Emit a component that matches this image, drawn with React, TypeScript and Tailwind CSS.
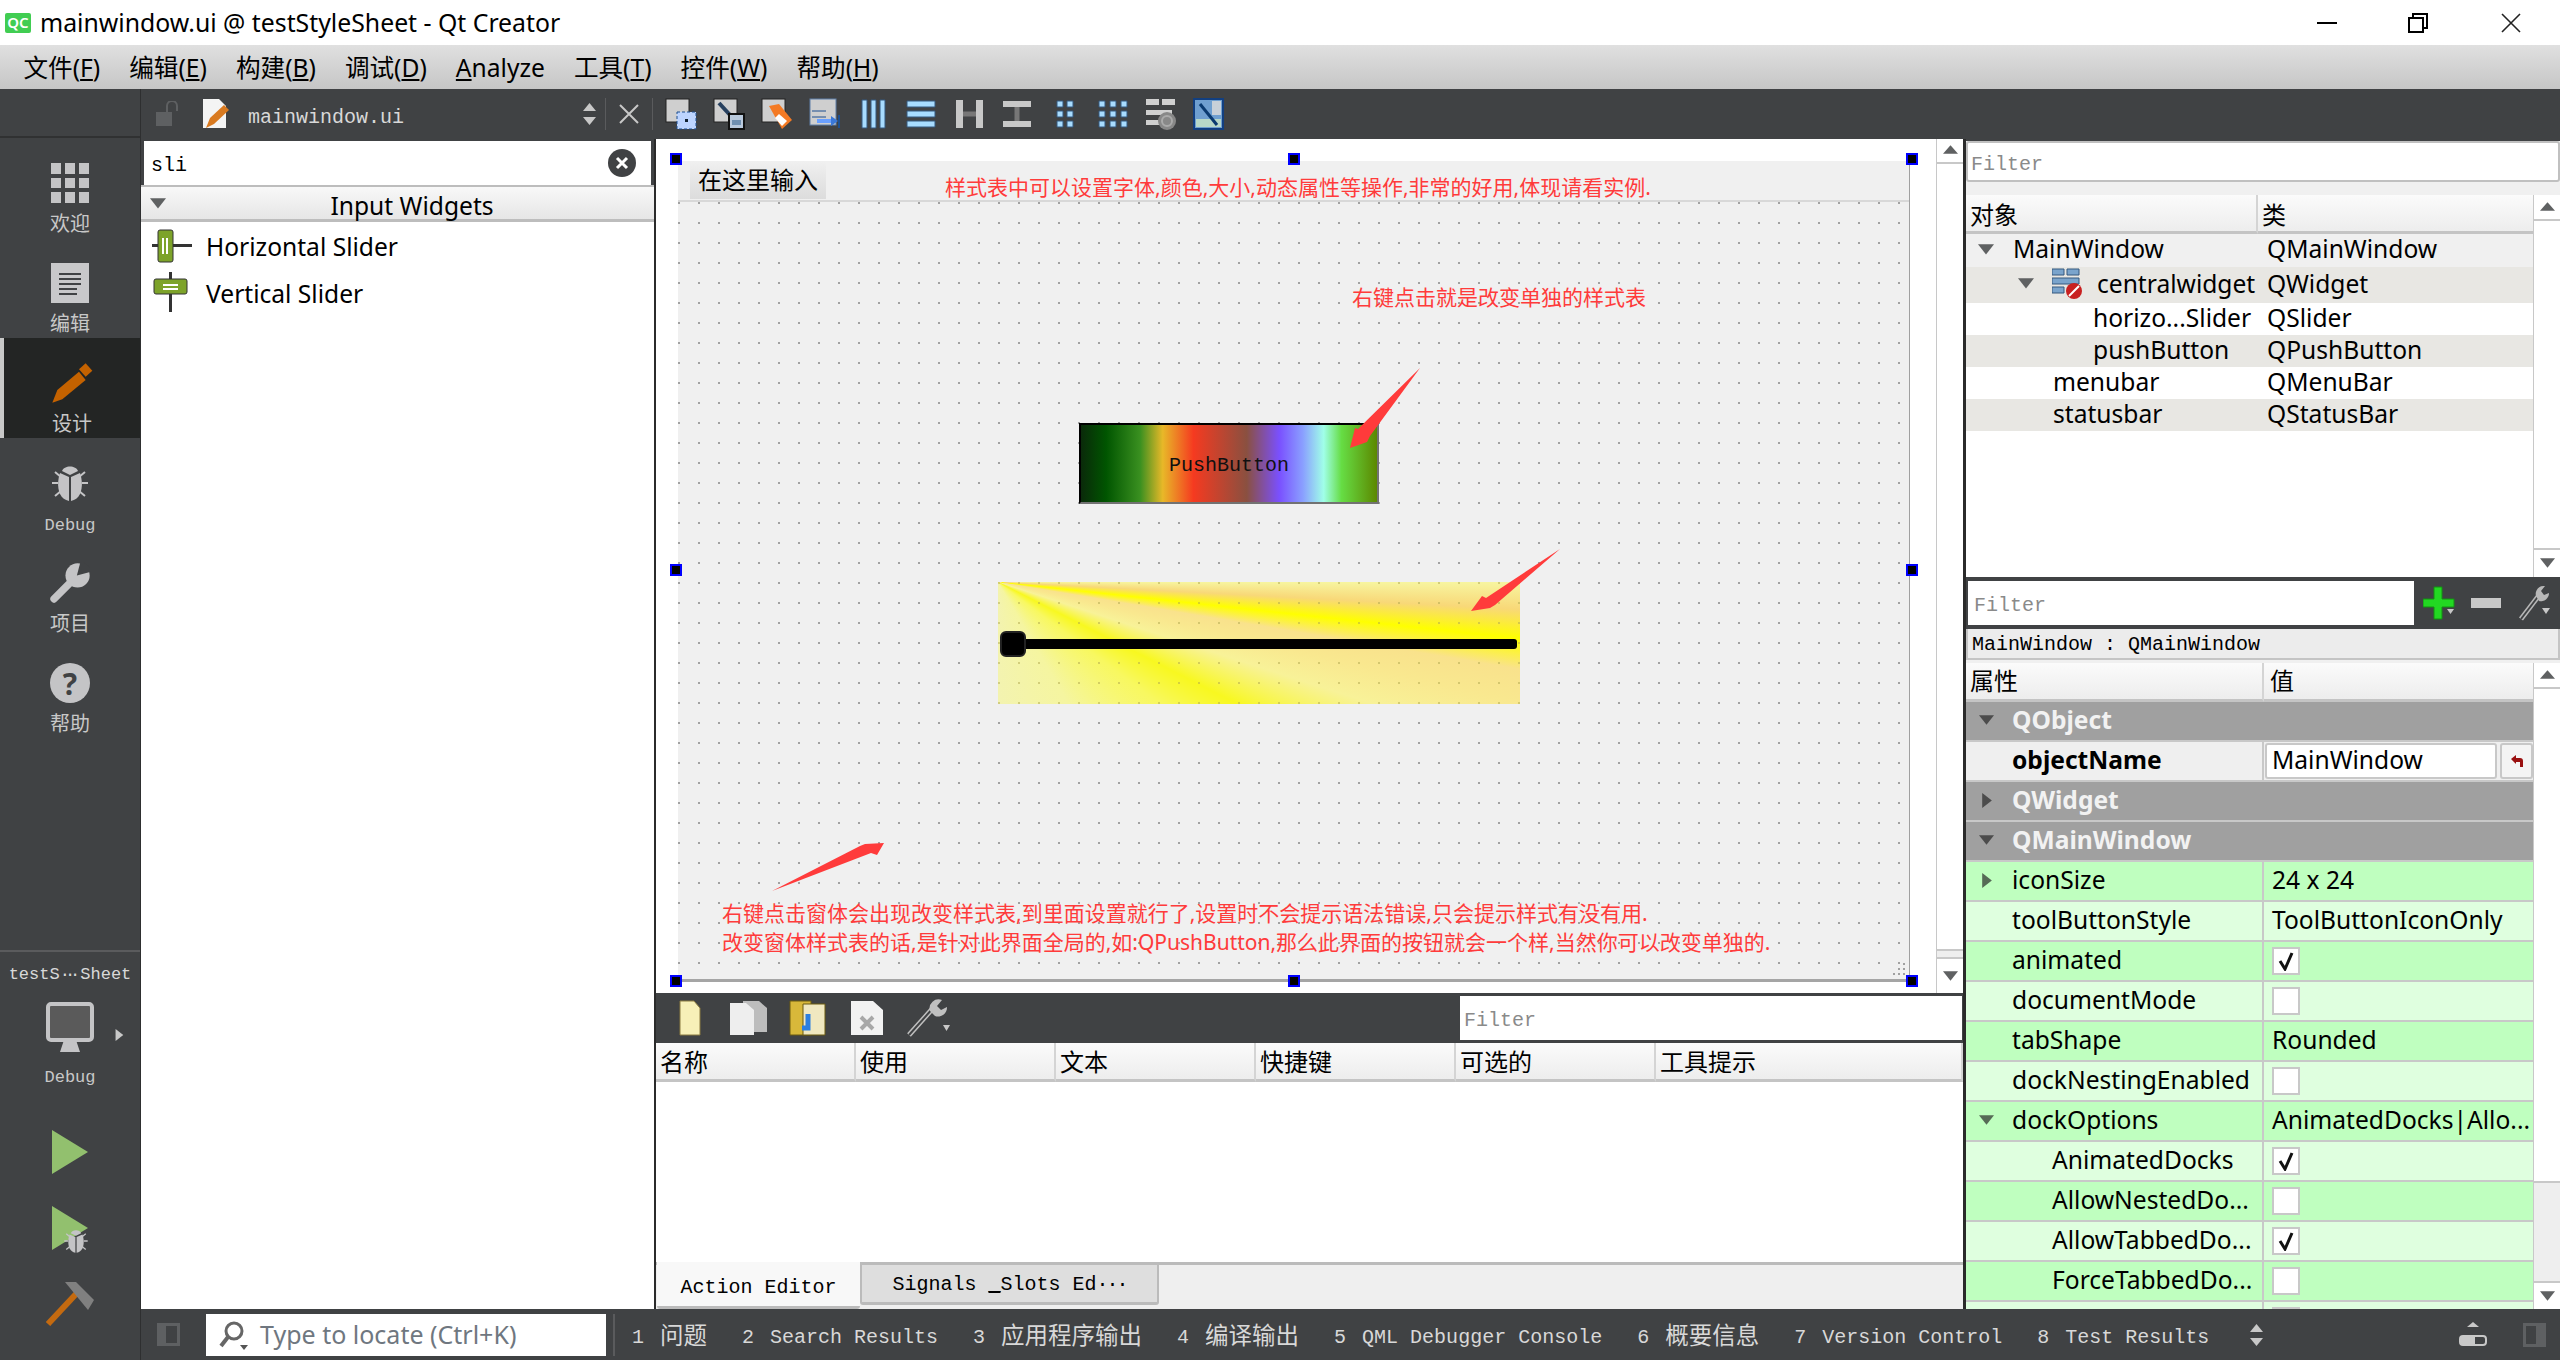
import type { ReactNode } from "react";

const ui = "font-['Noto_Sans','Noto_Sans_CJK_SC',sans-serif]";
const mono = "font-['Liberation_Mono','Noto_Sans_CJK_SC',monospace]";
const dots = "bg-[radial-gradient(circle_at_1px_1px,#a2a2a2_1px,transparent_1.4px)] bg-[size:20px_20px]";
const headerCell = "flex items-center border-b-[3px] border-[#c4c4c4] bg-gradient-to-b from-[#fbfbfb] to-[#ededed] text-[24px]";

function Tri({ dir, size = 14, color = "#5f6162" }: { dir: "up" | "down" | "right"; size?: number; color?: string }) {
  const pts = dir === "up" ? "0,10 14,10 7,2" : dir === "down" ? "0,2 14,2 7,11" : "3,0 12,7 3,14";
  return (
    <svg width={size} height={size} viewBox="0 0 14 14" className="shrink-0">
      <polygon points={pts} fill={color} />
    </svg>
  );
}

function UpDown() {
  return (
    <svg width="15" height="26" viewBox="0 0 15 26">
      <polygon points="1,10 14,10 7.5,2" fill="#c8c8c8" />
      <polygon points="1,16 14,16 7.5,24" fill="#c8c8c8" />
    </svg>
  );
}

function Bug({ size = 40 }: { size?: number }) {
  return (
    <svg width={size} height={size} viewBox="0 0 40 40">
      <g stroke="#c4c4c6" strokeWidth="2">
        <path d="M2 20h6M32 20h6M5 9l6 5M35 9l-6 5M5 33l6-5M35 33l-6-5" />
      </g>
      <path d="M19 14 L10 10 C8 16 7 24 10 31 C12 35 15 37 19 38Z" fill="#c4c4c6" />
      <path d="M21 14 L30 10 C32 16 33 24 30 31 C28 35 25 37 21 38Z" fill="#c4c4c6" />
      <path d="M12 8 C14 2 26 2 28 8 L20 12Z" fill="#c4c4c6" />
    </svg>
  );
}

function WelcomeIcon() {
  return (
    <div className="grid h-10 w-[38px] grid-cols-3 gap-1">
      {Array.from({ length: 9 }).map((_, i) => (
        <div key={i} className="bg-[#c4c4c6]" />
      ))}
    </div>
  );
}

function EditIcon() {
  return (
    <svg width="38" height="40" viewBox="0 0 38 40">
      <rect width="38" height="40" fill="#c8c8ca" />
      <path d="M8 11h22M8 16h22M8 21h22M8 26h18M8 31h18" stroke="#404244" strokeWidth="2" />
    </svg>
  );
}

function PencilIcon() {
  return (
    <svg width="44" height="42" viewBox="138 66 132 126">
      <polygon points="145,188 160,150 225,95 245,120 175,178" fill="#c46200" />
      <polygon points="225,88 245,70 265,92 245,110" fill="#c46200" />
    </svg>
  );
}

function WrenchIcon() {
  return (
    <svg width="42" height="42" viewBox="145 668 125 125">
      <path d="M160 778 L212 726" stroke="#c4c4c6" strokeWidth="22" strokeLinecap="round" />
      <circle cx="230" cy="708" r="36" fill="#c4c4c6" />
      <polygon points="228,708 240,662 280,694" fill="#404244" />
    </svg>
  );
}

function ModeButton({ icon, label, active, serif }: { icon: ReactNode; label: string; active?: boolean; serif?: boolean }) {
  return (
    <div
      className={`flex h-[100px] flex-col items-center pt-[25px] ${
        active ? "border-l-4 border-[#c8c8c8] bg-[#232524]" : ""
      }`}
    >
      <div className="flex h-10 items-center justify-center">{icon}</div>
      <div className={`text-[#c8c8c8] ${serif ? `mt-[10px] ${mono} text-[17px]` : `mt-[6px] ${ui} text-[20px]`}`}>{label}</div>
    </div>
  );
}

function Sidebar() {
  return (
    <div className="flex w-[141px] shrink-0 flex-col border-r border-[#2e2f30] bg-[#404244]">
      <div className="h-[49px] border-b-2 border-[#303132]" />
      <ModeButton icon={<WelcomeIcon />} label="欢迎" />
      <ModeButton icon={<EditIcon />} label="编辑" />
      <ModeButton icon={<PencilIcon />} label="设计" active />
      <ModeButton icon={<Bug />} label="Debug" serif />
      <ModeButton icon={<WrenchIcon />} label="项目" />
      <ModeButton
        icon={
          <div className={`flex h-10 w-10 items-center justify-center rounded-full bg-[#c4c4c6] text-[30px] font-bold text-[#404244] ${ui}`}>
            ?
          </div>
        }
        label="帮助"
      />
      <div className="mt-auto flex h-[410px] flex-col items-center border-t-2 border-[#5a5b5d]">
        <div className={`mt-[10px] text-[17px] text-[#d8d8d8] ${mono}`}>
          testS<span className="tracking-[-5px]">···</span>
          <span className="ml-[5px]">Sheet</span>
        </div>
        <div className="relative mt-[14px] h-[50px] w-12">
          <svg width="48" height="50" viewBox="0 0 48 50">
            <rect x="2" y="2" width="44" height="36" rx="3" fill="#5a5a5a" stroke="#c4c4c6" strokeWidth="4" />
            <polygon points="18,38 30,38 34,50 14,50" fill="#c4c4c6" />
          </svg>
          <div className="absolute left-[67px] top-[27px]">
            <Tri dir="right" size={12} color="#c8c8c8" />
          </div>
        </div>
        <div className={`mt-[13px] text-[17px] text-[#c8c8c8] ${mono}`}>Debug</div>
        <svg className="mt-[40px]" width="36" height="44" viewBox="0 0 36 44">
          <polygon points="0,0 36,22 0,44" fill="#92c06e" />
        </svg>
        <div className="relative mt-[32px] h-[45px] w-9">
          <svg width="36" height="44" viewBox="0 0 36 44">
            <polygon points="0,0 36,22 0,44" fill="#92c06e" />
          </svg>
          <div className="absolute left-[11px] top-[22px]">
            <Bug size={26} />
          </div>
        </div>
        <svg className="mt-[31px]" width="48" height="44" viewBox="0 0 48 44">
          <path d="M2 42 L30 12" stroke="#c46a10" strokeWidth="6" />
          <polygon points="19,0 30,0 48,18 42,28" fill="#808080" />
        </svg>
      </div>
    </div>
  );
}

function PageBase({ children, dark }: { children?: ReactNode; dark?: boolean }) {
  return (
    <svg width="32" height="32" viewBox="0 0 32 32">
      <rect x="1" y="1" width="23" height="23" fill={dark ? "#d8dee8" : "#cfcfcf"} stroke="#222" strokeWidth="1" />
      {children}
    </svg>
  );
}

const bars = "#a8dcff";
const toolIcons: ReactNode[] = [
  <PageBase key="a">
    <rect x="12" y="14" width="19" height="17" fill="#bcd4ff" stroke="#1c4f90" strokeDasharray="3 2" />
    <rect x="20" y="21" width="3" height="3" fill="#123" />
  </PageBase>,
  <PageBase key="b">
    <path d="M6 5l11 12" stroke="#27405f" strokeWidth="4" />
    <rect x="16" y="16" width="15" height="15" fill="#b9c9dc" stroke="#111" strokeWidth="2" />
    <rect x="19" y="22" width="9" height="5" fill="#6f8fb0" />
  </PageBase>,
  <PageBase key="c">
    <polygon points="8,8 18,6 31,22 21,31" fill="#f47a24" />
    <polygon points="18,16 26,23 21,28 14,20" fill="#fff" />
  </PageBase>,
  <svg key="d" width="32" height="32" viewBox="0 0 32 32">
    <rect x="1" y="1" width="26" height="26" fill="#cfcfcf" stroke="#5f7fa8" />
    <path d="M3 13h14M3 19h14" stroke="#1c4f90" />
    <path d="M8 23h18" stroke="#6aa0ff" strokeWidth="4" />
    <polygon points="22,18 29,23 22,28" fill="#3a78d8" />
    <rect x="29" y="17" width="2" height="13" fill="#1c4f90" />
  </svg>,
  <svg key="e" width="32" height="32" viewBox="0 0 32 32">
    <path d="M5 2h5v28H5zM14 2h5v28h-5zM23 2h5v28h-5z" fill={bars} stroke="#35597e" />
  </svg>,
  <svg key="f" width="32" height="32" viewBox="0 0 32 32">
    <path d="M2 3h28v6H2zM2 13h28v6H2zM2 23h28v6H2z" fill={bars} stroke="#35597e" />
  </svg>,
  <svg key="g" width="32" height="32" viewBox="0 0 32 32">
    <path d="M3 2h7v28H3zM23 2h7v28h-7z" fill="#c8c8c8" />
    <path d="M10 16h13" stroke="#777" strokeWidth="5" />
  </svg>,
  <svg key="h" width="32" height="32" viewBox="0 0 32 32">
    <path d="M2 3h28v6H2zM2 23h28v6H2z" fill="#c8c8c8" />
    <path d="M16 9v14" stroke="#777" strokeWidth="5" />
  </svg>,
  <svg key="i" width="32" height="32" viewBox="0 0 32 32">
    <path d="M8 3h6v6H8zM18 3h6v6h-6zM8 13h6v6H8zM18 13h6v6h-6zM8 23h6v6H8zM18 23h6v6h-6z" fill={bars} stroke="#35597e" />
  </svg>,
  <svg key="j" width="32" height="32" viewBox="0 0 32 32">
    <path d="M2 3h6v6H2zM13 3h6v6h-6zM24 3h6v6h-6zM2 13h6v6H2zM13 13h6v6h-6zM24 13h6v6h-6zM2 23h6v6H2zM13 23h6v6h-6zM24 23h6v6h-6z" fill={bars} stroke="#35597e" />
  </svg>,
  <svg key="k" width="32" height="32" viewBox="0 0 32 32">
    <path d="M1 1h13v6H1zM17 1h13v6H17zM1 12h26v5H1zM1 22h14v5H1z" fill="#d0d0d0" />
    <circle cx="22" cy="23" r="9" fill="#888" />
    <circle cx="22" cy="23" r="5" fill="none" stroke="#aaa" strokeWidth="2" />
  </svg>,
  <svg key="l" width="32" height="32" viewBox="0 0 32 32">
    <rect x="1" y="1" width="29" height="30" fill="#6f9fd0" stroke="#123f80" strokeWidth="2" />
    <rect x="19" y="3" width="9" height="14" fill="#c8d0d8" />
    <rect x="3" y="21" width="25" height="8" fill="#b8d8c8" />
    <path d="M7 6l17 21" stroke="#0a3a70" strokeWidth="3" />
  </svg>,
];

function TopStrip() {
  return (
    <div className="flex h-[50px] shrink-0 items-center bg-[#404244]">
      <div className="flex h-full w-[513px] shrink-0 items-center">
        <svg className="ml-[14px]" width="25" height="26" viewBox="0 0 25 26">
          <rect x="1" y="11" width="16" height="14" fill="#5e6062" />
          <path d="M12 11V5a5 5 0 0 1 10 0v5" fill="none" stroke="#5e6062" strokeWidth="2" />
        </svg>
        <svg className="ml-[22px]" width="28" height="32" viewBox="0 0 28 32">
          <polygon points="1,1 17,1 24,8 24,30 1,30" fill="#f4f4f4" />
          <polygon points="4,30 8,20 22,7 27,12 12,26" fill="#d97a20" />
        </svg>
        <span className={`ml-[18px] pt-[7px] text-[20px] text-[#d8d8d8] ${mono}`}>mainwindow.ui</span>
        <div className="ml-auto mr-[1px] flex items-center">
          <UpDown />
          <div className="ml-[8px] h-8 w-px bg-[#5a5b5d]" />
          <svg className="ml-[12px]" width="22" height="22" viewBox="0 0 22 22">
            <path d="M2 2l18 18M20 2L2 20" stroke="#c8c8c8" strokeWidth="2" />
          </svg>
          <div className="ml-[12px] h-8 w-px bg-[#5a5b5d]" />
        </div>
      </div>
      <div className="ml-[11px] flex items-center gap-4">{toolIcons}</div>
    </div>
  );
}

function LeftPanel() {
  return (
    <div className={`flex w-[515px] shrink-0 flex-col border-r-2 border-[#2b2b2b] bg-white ${ui}`}>
      <div className="bg-[#404244] pl-[3px] pr-[3px] pt-[2px]">
        <div className="flex h-[44px] items-center bg-white pl-[7px] pr-[15px]">
          <span className={`pt-[6px] text-[20px] text-black ${mono}`}>sli</span>
          <div className="ml-auto flex h-7 w-7 items-center justify-center rounded-full bg-[#404244]">
            <svg width="14" height="14" viewBox="0 0 14 14">
              <path d="M2 2l10 10M12 2L2 12" stroke="#fff" strokeWidth="3" />
            </svg>
          </div>
        </div>
      </div>
      <div className="relative flex h-[37px] items-center justify-center border-b-[3px] border-t-2 border-[#bdbdbd] bg-gradient-to-b from-[#f8f8f8] to-[#e6e6e6] pl-[29px] pt-[6px] text-[24.6px] leading-none text-black">
        <div className="absolute left-[9px] top-[9px]">
          <Tri dir="down" size={16} />
        </div>
        Input Widgets
      </div>
      <div className="flex h-[47px] items-center pl-[10px] text-[24.6px] text-black">
        <svg width="42" height="36" viewBox="0 0 42 36">
          <rect x="1" y="16" width="40" height="3" fill="#333" />
          <rect x="7" y="2" width="15" height="32" rx="2" fill="#7da32a" stroke="#333" />
          <path d="M12 10v16M16 10v16" stroke="#fff" strokeWidth="2" />
        </svg>
        <span className="ml-[13px] pt-[3px]">Horizontal Slider</span>
      </div>
      <div className="flex h-[47px] items-center pl-[10px] text-[24.6px] text-black">
        <svg width="42" height="42" viewBox="0 0 42 42">
          <rect x="18" y="0" width="3" height="40" fill="#333" />
          <rect x="3" y="7" width="33" height="15" rx="2" fill="#7da32a" stroke="#333" />
          <path d="M12 13h15M12 17h15" stroke="#fff" strokeWidth="2" />
        </svg>
        <span className="ml-[13px] pt-[4px]">Vertical Slider</span>
      </div>
    </div>
  );
}

function Handle({ x, y }: { x: number; y: number }) {
  return (
    <div
      className="absolute h-3 w-3 border-2 border-[#0000ff] bg-black"
      style={{ left: x - 656 - 6, top: y - 139 - 6 }}
    />
  );
}

function Arrows() {
  return (
    <svg className="absolute left-0 top-0" width="1280" height="854" viewBox="656 139 1280 854">
      <polygon points="1420,368 1370,436 1367,442 1350,448 1355,428 1358,429" fill="#ff3b3b" />
      <polygon points="1560,549 1495,605 1490,608 1471,611 1482,596 1486,598" fill="#ff3b3b" />
      <polygon points="772,891 860,846 865,844 884,843 877,855 871,853" fill="#ff3b3b" />
    </svg>
  );
}

function FormCanvas() {
  const red = `absolute text-[21px] leading-none whitespace-nowrap text-[#ff3b3b] ${ui}`;
  return (
    <div className="relative flex-1 overflow-hidden bg-white">
      <div className="absolute left-[22px] top-[22px] flex h-[821px] w-[1232px] flex-col border-r border-b-[3px] border-r-[#a0a0a0] border-b-[#a5a5a5] bg-[#f0f0f0]">
        <div className="h-[41px] shrink-0 border-b-2 border-[#d8d8d8] pl-3">
          <div className={`flex h-[38px] w-[136px] items-center justify-center bg-gradient-to-b from-[#f0f0f0] to-[#dcdcdc] text-[24px] text-black ${ui}`}>
            在这里输入
          </div>
        </div>
        <div className={`relative flex-1 ${dots}`}>
          <div
            className={`absolute left-[401px] top-[221px] flex h-[81px] w-[300px] items-center justify-center border-2 border-t-black border-l-black border-r-[#727272] border-b-[#727272] bg-[linear-gradient(90deg,#0a2a0a_0%,#005500_8.5%,#3a9020_20%,#e8b828_27.6%,#f53a20_38%,#8a5040_56%,#7a50ff_67%,#8aa0ff_75%,#a0ffe8_82%,#66dd44_88%,#5c8800_100%)] pt-[5px] text-[20px] text-[#111] ${mono}`}
          >
            PushButton
          </div>
          <div className="absolute left-[320px] top-[380px] flex h-[122px] w-[522px] items-center bg-[image:radial-gradient(circle_at_1px_1px,#b0a85080_1px,transparent_1.4px),conic-gradient(from_90deg_at_0_0,#f7f5a0_0deg,#f8d878_3deg,#ffff00_6.2deg,#f9e28c_9.5deg,#f9e88f_13deg,#f8f298_18deg,#f8f820_27deg,#f8f860_37deg,#f5f5a0_60deg,#f3f3b0_90deg)] bg-[size:20px_20px,100%_100%] pt-[2px]">
            <div className="relative ml-[2px] h-[10px] w-[517px] rounded-[3px] bg-black">
              <div className="absolute -top-[8px] left-0 h-[26px] w-[26px] rounded-[6px] border-2 border-[#222] bg-black" />
            </div>
          </div>
          <div className="absolute bottom-[4px] right-[4px] grid grid-cols-3 gap-[3px]">
            {Array.from({ length: 9 }).map((_, i) => (
              <div key={i} className={`h-[2px] w-[2px] ${i === 0 || i === 1 || i === 3 ? "bg-transparent" : "bg-[#a0a0a0]"}`} />
            ))}
          </div>
        </div>
      </div>
      <div className={red} style={{ left: 289, top: 38 }}>
        样式表中可以设置字体,颜色,大小,动态属性等操作,非常的好用,体现请看实例.
      </div>
      <div className={red} style={{ left: 696, top: 148 }}>
        右键点击就是改变单独的样式表
      </div>
      <div className={red} style={{ left: 66, top: 764 }}>
        右键点击窗体会出现改变样式表,到里面设置就行了,设置时不会提示语法错误,只会提示样式有没有用.
      </div>
      <div className={red} style={{ left: 66, top: 793 }}>
        改变窗体样式表的话,是针对此界面全局的,如:QPushButton,那么此界面的按钮就会一个样,当然你可以改变单独的.
      </div>
      <Arrows />
      {[159, 570, 981].map((y) =>
        [676, 1294, 1912].map((x) => (y === 570 && x === 1294 ? null : <Handle key={`${x}-${y}`} x={x} y={y} />)),
      )}
    </div>
  );
}

function Scrollbar({ topH, thumb, botH }: { topH: number; thumb?: number; botH: number }) {
  return (
    <div className="flex w-[27px] shrink-0 flex-col border-l border-[#c8c8c8] bg-white">
      <div className="flex items-center justify-center border-b-2 border-[#c8c8c8]" style={{ height: topH }}>
        <Tri dir="up" size={15} />
      </div>
      <div className="flex flex-1 flex-col justify-end">
        {thumb ? <div className="border-t-2 border-[#c8c8c8] bg-[#eeeeee]" style={{ height: thumb }} /> : null}
      </div>
      <div className="flex items-center justify-center border-t-2 border-[#c8c8c8]" style={{ height: botH }}>
        <Tri dir="down" size={15} />
      </div>
    </div>
  );
}

function ActionToolbar() {
  return (
    <div className="flex h-[50px] shrink-0 items-center bg-[#404244] pl-[23px]">
      <svg width="22" height="36" viewBox="0 0 22 36">
        <polygon points="1,1 15,1 21,8 21,35 1,35" fill="#f7f0b8" stroke="#8a7a40" />
      </svg>
      <svg className="ml-[28px]" width="40" height="36" viewBox="0 0 40 36">
        <polygon points="14,1 30,1 38,8 38,32 14,32" fill="#bdbdbd" />
        <polygon points="1,3 17,3 25,10 25,35 1,35" fill="#eeeeee" />
      </svg>
      <svg className="ml-[20px]" width="38" height="36" viewBox="0 0 38 36">
        <polygon points="1,1 22,1 22,35 1,35" fill="#d8b83a" stroke="#6a5a10" />
        <polygon points="14,4 36,4 36,35 14,35" fill="#f0e8c0" stroke="#6a5a10" />
        <path d="M19 14v14h-6" fill="none" stroke="#2b7fe0" strokeWidth="5" />
      </svg>
      <svg className="ml-[24px]" width="32" height="36" viewBox="0 0 32 36">
        <polygon points="0,1 22,1 32,10 32,35 0,35" fill="#f2f2f2" />
        <path d="M10 17l12 12M22 17L10 29" stroke="#a8a8a8" strokeWidth="4" />
      </svg>
      <svg className="ml-[23px]" width="44" height="38" viewBox="0 0 44 38">
        <path d="M3 36L28 8" stroke="#c0c0c0" strokeWidth="5" />
        <path d="M3 36L28 8" stroke="#404244" strokeWidth="2" />
        <path d="M24 12a9 9 0 0 1 12-11l-5 6 4 4 6-3a9 9 0 0 1-12 9z" fill="#c0c0c0" />
        <polygon points="37,26 44,26 40.5,32" fill="#c8c8c8" />
      </svg>
      <div className="ml-auto flex h-11 w-[502px] items-center bg-white pl-[4px]">
        <span className={`pt-[6px] text-[20px] text-[#8a8a8a] ${mono}`}>Filter</span>
      </div>
      <div className="w-[1px]" />
    </div>
  );
}

function CenterColumn() {
  const cols = ["名称", "使用", "文本", "快捷键", "可选的", "工具提示"];
  return (
    <div className={`flex w-[1307px] shrink-0 flex-col bg-white ${ui}`}>
      <div className="flex h-[854px] shrink-0">
        <FormCanvas />
        <div className="flex">
          <Scrollbar topH={25} botH={36} thumb={8} />
        </div>
      </div>
      <ActionToolbar />
      <div className="flex h-[39px] shrink-0">
        {cols.map((c, i) => (
          <div
            key={c}
            className={`${headerCell} w-[200px] border-r-2 border-r-[#d4d4d4] pl-[4px] pt-[2px] ${i === 5 ? "flex-1 border-r-0" : ""}`}
          >
            {c}
          </div>
        ))}
      </div>
      <div className="flex-1 bg-white" />
      <div className={`flex h-[47px] shrink-0 items-start border-t-[3px] border-[#bbbbbb] bg-[#efefef] pl-[1px] text-[20px] text-black ${mono}`}>
        <div className="-mt-[3px] flex h-[47px] w-[203px] items-center justify-center rounded-b-[3px] border-b-[3px] border-[#bbbbbb] bg-[#f8f8f8] pt-[8px]">
          Action Editor
        </div>
        <div className="flex h-[40px] w-[299px] items-center justify-center rounded-b-[3px] border-x-2 border-b-[3px] border-[#bbbbbb] bg-[#dedede] pt-[2px]">
          <span>
            Signals <span className="underline">_</span>Slots Ed<span className="tracking-[-2px]">···</span>
          </span>
        </div>
      </div>
    </div>
  );
}

type Tree = { name: string; cls: string; x: number; bg: string; caret?: boolean; icon?: boolean; h: number };

const tree: Tree[] = [
  { name: "MainWindow", cls: "QMainWindow", x: 47, bg: "bg-[#f0f0f0]", caret: true, h: 33 },
  { name: "centralwidget", cls: "QWidget", x: 131, bg: "bg-[#e8e7e3]", caret: true, icon: true, h: 36 },
  { name: "horizo...Slider", cls: "QSlider", x: 127, bg: "bg-white", h: 32 },
  { name: "pushButton", cls: "QPushButton", x: 127, bg: "bg-[#e8e7e3]", h: 32 },
  { name: "menubar", cls: "QMenuBar", x: 87, bg: "bg-white", h: 32 },
  { name: "statusbar", cls: "QStatusBar", x: 87, bg: "bg-[#e8e7e3]", h: 32 },
];

function ObjectTree() {
  return (
    <div className="flex h-[438px] shrink-0 flex-col bg-white">
      <div className="shrink-0 bg-[#404244] pt-[2px]">
        <div className="h-[43px] bg-[#f0f0f0]">
          <div className="flex h-[41px] items-center rounded-[3px] border-2 border-[#c0c0c0] bg-white pl-[3px]">
            <span className={`pt-[6px] text-[20px] text-[#8a8a8a] ${mono}`}>Filter</span>
          </div>
        </div>
      </div>
      <div className="h-[11px] shrink-0 bg-[#f0f0f0]" />
      <div className="flex flex-1">
        <div className="flex flex-1 flex-col">
          <div className="flex h-[39px] shrink-0">
            <div className={`${headerCell} w-[292px] border-r-2 border-r-[#d4d4d4] pl-[4px] pt-[4px]`}>对象</div>
            <div className={`${headerCell} flex-1 pl-[4px] pt-[4px]`}>类</div>
          </div>
          {tree.map((row, i) => (
            <div key={row.name} className={`relative flex items-center pb-[2px] text-[24.6px] leading-none text-black ${row.bg}`} style={{ height: row.h }}>
              {row.caret ? (
                <div className="absolute" style={{ left: i === 0 ? 12 : 52 }}>
                  <Tri dir="down" size={16} />
                </div>
              ) : null}
              {row.icon ? (
                <svg className="absolute left-[86px]" width="32" height="32" viewBox="0 0 32 32">
                  <path d="M0 1h12v6H0zM15 1h12v6H15zM0 10h27v6H0zM0 19h12v6H0z" fill="#7aa4cc" stroke="#35597e" />
                  <circle cx="22" cy="23" r="8" fill="#c82020" />
                  <path d="M17 28l10-10" stroke="#fff" strokeWidth="2" />
                </svg>
              ) : null}
              <span className="absolute" style={{ left: row.x }}>
                {row.name}
              </span>
              <span className="absolute left-[301px]">{row.cls}</span>
            </div>
          ))}
        </div>
        <Scrollbar topH={26} botH={29} />
      </div>
    </div>
  );
}

type Prop = {
  name: string;
  value?: string;
  check?: boolean;
  dark?: boolean;
  level?: number;
  caret?: "down" | "right";
};

const props: Prop[] = [
  { name: "iconSize", value: "24 x 24", dark: true, caret: "right" },
  { name: "toolButtonStyle", value: "ToolButtonIconOnly" },
  { name: "animated", check: true, dark: true },
  { name: "documentMode", check: false },
  { name: "tabShape", value: "Rounded", dark: true },
  { name: "dockNestingEnabled", check: false },
  { name: "dockOptions", value: "AnimatedDocks|Allo...", dark: true, caret: "down" },
  { name: "AnimatedDocks", check: true, level: 1 },
  { name: "AllowNestedDo...", check: false, dark: true, level: 1 },
  { name: "AllowTabbedDo...", check: true, level: 1 },
  { name: "ForceTabbedDo...", check: false, dark: true, level: 1 },
  { name: "", check: false, level: 1 },
];

function Group({ name, open }: { name: string; open?: boolean }) {
  return (
    <div className="flex h-10 shrink-0 items-center border-b-2 border-[#c8c8c8] bg-[#a0a0a0] pb-[2px] pl-[13px] text-[24.6px] font-bold leading-none text-[#f2f2f2]">
      <div className="w-[33px]">
        <Tri dir={open ? "down" : "right"} size={15} color="#4c4c4c" />
      </div>
      {name}
    </div>
  );
}

function Checkbox({ on }: { on?: boolean }) {
  return (
    <div className="flex h-[28px] w-[28px] items-center justify-center border-2 border-[#c8c8c8] bg-white">
      {on ? (
        <svg width="16" height="20" viewBox="0 0 16 20">
          <path d="M2 10l5 8L14 2" fill="none" stroke="#111" strokeWidth="3" />
        </svg>
      ) : null}
    </div>
  );
}

function PropRow({ p }: { p: Prop }) {
  return (
    <div className={`flex h-10 shrink-0 border-b-2 border-[#c8c8c8] text-[24.6px] leading-none text-black ${p.dark ? "bg-[#bfffbf]" : "bg-[#dfffdf]"}`}>
      <div className="relative flex w-[298px] shrink-0 items-center border-r-2 border-[#c8c8c8] pb-[2px]" style={{ paddingLeft: p.level ? 86 : 46 }}>
        {p.caret ? (
          <div className="absolute left-[13px]">
            <Tri dir={p.caret} size={15} color="#566b56" />
          </div>
        ) : null}
        {p.name}
      </div>
      <div className={`flex flex-1 items-center pl-[8px] whitespace-nowrap ${p.check === undefined ? "pb-[2px]" : ""}`}>
        {p.check !== undefined ? <Checkbox on={p.check} /> : p.value}
      </div>
    </div>
  );
}

function PropertyEditor() {
  return (
    <div className="flex min-h-0 flex-1 flex-col bg-[#f0f0f0]">
      <div className="flex h-[52px] shrink-0 items-center bg-[#404244] pl-[2px]">
        <div className="flex h-[44px] w-[446px] items-center bg-white pl-[6px]">
          <span className={`pt-[6px] text-[20px] text-[#8a8a8a] ${mono}`}>Filter</span>
        </div>
        <svg className="ml-[9px]" width="32" height="36" viewBox="0 0 32 36">
          <path d="M11 2h8v12h12v8H19v12h-8V22H0v-8h11z" fill="#22d822" stroke="#129012" />
          <polygon points="24,24 31,24 27.5,29" fill="#c8c8c8" />
        </svg>
        <svg className="ml-[16px]" width="30" height="10" viewBox="0 0 30 10">
          <rect width="30" height="10" fill="#c8c8c8" />
        </svg>
        <svg className="ml-[17px]" width="32" height="38" viewBox="0 0 32 38">
          <path d="M3 35L22 10" stroke="#b8b8b8" strokeWidth="5" />
          <path d="M3 35L22 10" stroke="#404244" strokeWidth="2" />
          <path d="M18 12a8 8 0 0 1 9-10l-4 5 3 4 5-2a8 8 0 0 1-10 8z" fill="#b8b8b8" />
          <polygon points="24,24 32,24 28,30" fill="#c8c8c8" />
        </svg>
      </div>
      <div className={`flex h-[31px] shrink-0 items-center border-2 border-t-0 border-[#c4c4c4] bg-[#ececec] pl-[4px] pt-[3px] text-[20px] text-black ${mono}`}>
        MainWindow : QMainWindow
      </div>
      <div className="h-[3px] shrink-0" />
      <div className="flex min-h-0 flex-1">
        <div className="flex min-w-0 flex-1 flex-col overflow-hidden">
          <div className="flex h-[39px] shrink-0">
            <div className={`${headerCell} w-[298px] border-r-2 border-r-[#d4d4d4] pl-[4px]`}>属性</div>
            <div className={`${headerCell} flex-1 pl-[6px]`}>值</div>
          </div>
          <Group name="QObject" open />
          <div className="flex h-10 shrink-0 border-b-2 border-[#c8c8c8] bg-[#efefef] text-[24.6px] leading-none text-black">
            <div className="flex w-[298px] shrink-0 items-center border-r-2 border-[#c8c8c8] pb-[2px] pl-[46px] font-bold">objectName</div>
            <div className="flex flex-1 items-center gap-[3px] pl-[1px]">
              <div className="flex h-[36px] w-[232px] items-center rounded-[3px] border-2 border-[#c8c8c8] bg-white pb-[2px] pl-[5px]">MainWindow</div>
              <div className="flex h-[36px] flex-1 items-center justify-center rounded-[3px] border-2 border-[#c8c8c8] bg-[#f4f4f4]">
                <svg width="14" height="14" viewBox="0 0 14 14">
                  <path d="M1 5l5-4v3h4a3 3 0 0 1 3 3v6h-3V8H6v2z" fill="#9a1010" />
                </svg>
              </div>
            </div>
          </div>
          <Group name="QWidget" />
          <Group name="QMainWindow" open />
          {props.map((p, i) => (
            <PropRow key={i} p={p} />
          ))}
        </div>
        <Scrollbar topH={26} thumb={100} botH={28} />
      </div>
    </div>
  );
}

function StatusBar() {
  const items: [string, string][] = [
    ["1", "问题"],
    ["2", "Search Results"],
    ["3", "应用程序输出"],
    ["4", "编译输出"],
    ["5", "QML Debugger Console"],
    ["6", "概要信息"],
    ["7", "Version Control"],
    ["8", "Test Results"],
  ];
  return (
    <div className="flex h-[51px] shrink-0 items-center bg-[#404244]">
      <svg className="ml-[16px]" width="23" height="23" viewBox="0 0 23 23">
        <rect width="23" height="23" fill="#5e6062" />
        <rect x="9" y="3" width="11" height="17" fill="#404244" />
      </svg>
      <div className={`ml-[26px] flex h-[42px] w-[400px] items-center bg-white pl-[12px] text-[25px] text-[#6f7780] ${ui}`}>
        <svg className="mr-[10px]" width="32" height="32" viewBox="0 0 32 32">
          <circle cx="16" cy="12" r="8" fill="none" stroke="#666" strokeWidth="3" />
          <path d="M10 18L3 27" stroke="#666" strokeWidth="4" />
          <polygon points="22,26 30,26 26,31" fill="#555" />
        </svg>
        Type to locate (Ctrl+K)
      </div>
      <div className="ml-[7px] h-[42px] w-[2px] bg-[#5a5b5d]" />
      <div className={`ml-[17px] flex items-center gap-[35px] pt-[6px] text-[20px] text-[#d8d8d8] ${mono}`}>
        {items.map(([n, label]) => (
          <div key={n} className="flex items-center gap-4 whitespace-nowrap">
            <span>{n}</span>
            <span className={/[a-z]/i.test(label) ? "" : "text-[23.5px]"}>{label}</span>
          </div>
        ))}
      </div>
      <div className="ml-[40px]">
        <UpDown />
      </div>
      <svg className="ml-auto" width="28" height="28" viewBox="0 0 28 28">
        <polygon points="14,1 20,6 8,6" fill="#c8c8c8" />
        <rect x="1" y="15" width="26" height="9" rx="3" fill="#404244" stroke="#c8c8c8" strokeWidth="2" />
        <rect x="2" y="16" width="14" height="7" fill="#c8c8c8" />
      </svg>
      <svg className="ml-[36px] mr-[14px]" width="23" height="24" viewBox="0 0 23 24">
        <rect width="23" height="24" fill="#5e6062" />
        <rect x="3" y="3" width="10" height="18" fill="#404244" />
      </svg>
    </div>
  );
}

function MenuItem({ label, acc }: { label: string; acc: string }) {
  return (
    <div className="flex items-center px-[14.5px] text-black">
      {label}(<span className="underline underline-offset-2">{acc}</span>)
    </div>
  );
}

export default function App() {
  return (
    <div className={`flex h-[1360px] w-[2560px] flex-col overflow-hidden bg-white ${ui}`}>
      <div className="flex h-[45px] shrink-0 items-center bg-white">
        <div className="ml-[5px] flex h-[20px] w-[26px] items-center justify-center rounded-[2px] bg-[#41cd52] text-[15px] font-semibold leading-none text-white">
          QC
        </div>
        <span className="ml-[9px] pt-[1px] text-[24.8px] text-black">mainwindow.ui @ testStyleSheet - Qt Creator</span>
        <div className="ml-auto flex items-center">
          <div className="h-[2px] w-5 bg-black" />
          <svg className="ml-[71px]" width="20" height="20" viewBox="0 0 20 20">
            <rect x="1" y="5" width="14" height="14" fill="none" stroke="#000" strokeWidth="2" />
            <path d="M5 5V1h14v14h-4" fill="none" stroke="#000" strokeWidth="2" />
          </svg>
          <svg className="ml-[73px] mr-[39px]" width="20" height="20" viewBox="0 0 20 20">
            <path d="M1 1l18 18M19 1L1 19" stroke="#222" strokeWidth="1.6" />
          </svg>
        </div>
      </div>
      <div className="flex h-[44px] shrink-0 items-center bg-gradient-to-b from-[#e0e0e0] to-[#c6c6c6] pl-[9px] pt-[2px] text-[24.6px]">
        <MenuItem label="文件" acc="F" />
        <MenuItem label="编辑" acc="E" />
        <MenuItem label="构建" acc="B" />
        <MenuItem label="调试" acc="D" />
        <div className="px-[14.5px] text-black">
          <span className="underline underline-offset-2">A</span>nalyze
        </div>
        <MenuItem label="工具" acc="T" />
        <MenuItem label="控件" acc="W" />
        <MenuItem label="帮助" acc="H" />
      </div>
      <div className="flex min-h-0 flex-1">
        <Sidebar />
        <div className="flex min-w-0 flex-1 flex-col">
          <TopStrip />
          <div className="flex min-h-0 flex-1">
            <LeftPanel />
            <CenterColumn />
            <div className="w-[3px] shrink-0 bg-[#2b2b2b]" />
            <div className={`flex min-w-0 flex-1 flex-col ${ui}`}>
              <ObjectTree />
              <PropertyEditor />
            </div>
          </div>
          <StatusBar />
        </div>
      </div>
    </div>
  );
}
